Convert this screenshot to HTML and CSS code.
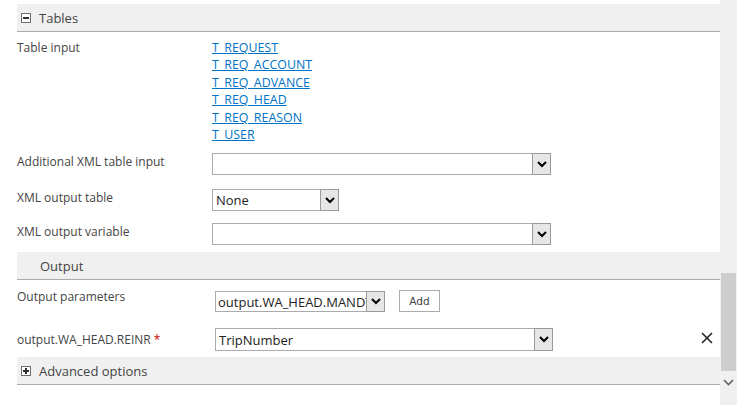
FILE: index.html
```html
<!DOCTYPE html>
<html>
<head>
<meta charset="utf-8">
<link rel="stylesheet" href="styles.css">
</head>
<body>
<div class="page">
  <div class="content">
    <div class="section-head">
      <span class="toggle"><span class="bar-h"></span></span>
      <span class="head-text">Tables</span>
    </div>

    <div class="row row-tables">
      <div class="label">Table input</div>
      <div class="field links">
        <a href="#">T_REQUEST</a>
        <a href="#">T_REQ_ACCOUNT</a>
        <a href="#">T_REQ_ADVANCE</a>
        <a href="#">T_REQ_HEAD</a>
        <a href="#">T_REQ_REASON</a>
        <a href="#">T_USER</a>
      </div>
    </div>

    <div class="row row-addxml">
      <div class="label">Additional XML table input</div>
      <div class="field">
        <div class="select wide">
          <span class="select-text"></span>
          <span class="select-btn"><svg width="10" height="7" viewBox="0 0 10 7"><polyline points="1,1 5,5 9,1" fill="none" stroke="#000" stroke-width="2"/></svg></span>
        </div>
      </div>
    </div>

    <div class="row row-xmltable">
      <div class="label">XML output table</div>
      <div class="field">
        <div class="select short">
          <span class="select-text">None</span>
          <span class="select-btn"><svg width="10" height="7" viewBox="0 0 10 7"><polyline points="1,1 5,5 9,1" fill="none" stroke="#000" stroke-width="2"/></svg></span>
        </div>
      </div>
    </div>

    <div class="row row-xmlvar">
      <div class="label">XML output variable</div>
      <div class="field">
        <div class="select wide">
          <span class="select-text"></span>
          <span class="select-btn"><svg width="10" height="7" viewBox="0 0 10 7"><polyline points="1,1 5,5 9,1" fill="none" stroke="#000" stroke-width="2"/></svg></span>
        </div>
      </div>
    </div>

    <div class="section-head sub-head">
      <span class="head-text">Output</span>
    </div>

    <div class="row row-outparams">
      <div class="label">Output parameters</div>
      <div class="field field-out">
        <div class="select param">
          <span class="select-text clip">output.WA_HEAD.MANDT</span>
          <span class="select-btn"><svg width="10" height="7" viewBox="0 0 10 7"><polyline points="1,1 5,5 9,1" fill="none" stroke="#000" stroke-width="2"/></svg></span>
        </div>
        <span class="add-btn">Add</span>
      </div>
    </div>

    <div class="row row-reinr">
      <div class="label">output.WA_HEAD.REINR <span class="req">*</span></div>
      <div class="field field-out">
        <div class="select trip">
          <span class="select-text">TripNumber</span>
          <span class="select-btn"><svg width="10" height="7" viewBox="0 0 10 7"><polyline points="1,1 5,5 9,1" fill="none" stroke="#000" stroke-width="2"/></svg></span>
        </div>
      </div>
      <span class="remove"><svg width="12" height="12" viewBox="0 0 12 12"><path d="M1 1 L11 11 M11 1 L1 11" stroke="#222" stroke-width="1.6" fill="none"/></svg></span>
    </div>

    <div class="section-head adv-head">
      <span class="toggle"><span class="bar-h"></span><span class="bar-v"></span></span>
      <span class="head-text">Advanced options</span>
    </div>
  </div>

  <div class="scrollbar">
    <div class="thumb"></div>
    <div class="scroll-down"><svg width="11" height="7" viewBox="0 0 11 7"><polyline points="1,1 5.5,5.5 10,1" fill="none" stroke="#606060" stroke-width="1.6"/></svg></div>
  </div>
</div>
</body>
</html>
```

FILE: styles.css
```css
html, body {
  margin: 0;
  padding: 0;
  background: #fff;
}

body {
  font-family: "Open Sans", "Noto Sans", "Liberation Sans", sans-serif;
  font-size: 12px;
  color: #444;
}

.page {
  display: flex;
  align-items: flex-start;
  width: 756px;
}

.content {
  width: 703px;
  margin-left: 17px;
  padding-top: 4px;
}

.section-head {
  display: flex;
  align-items: center;
  height: 27px;
  background: #f0f0f0;
  border-bottom: 1px solid #ababab;
  font-size: 13px;
  color: #444;
}

.toggle {
  position: relative;
  width: 8px;
  height: 8px;
  border: 1px solid #6d6d6d;
  background: #fff;
  margin-left: 4px;
  margin-right: 8px;
}

.bar-h {
  position: absolute;
  left: 1px;
  top: 3px;
  width: 6px;
  height: 2px;
  background: #333;
}

.bar-v {
  position: absolute;
  left: 3px;
  top: 1px;
  width: 2px;
  height: 6px;
  background: #333;
}

.sub-head .head-text {
  margin-left: 23px;
}

.row {
  display: flex;
  align-items: flex-start;
}

.label {
  width: 195px;
  flex: none;
  line-height: 18px;
  color: #444;
}

.field {
  display: flex;
  align-items: center;
}

.links {
  flex-direction: column;
  align-items: flex-start;
}

.links a {
  color: #0072c6;
  text-decoration: underline;
  font-size: 12.4px;
  line-height: 17.4px;
}

.row-tables {
  padding-top: 7px;
}

.row-tables .label {
  line-height: 17.4px;
}

.row-addxml {
  margin-top: 10px;
}

.row-xmltable {
  margin-top: 14px;
}

.row-xmlvar {
  margin-top: 12px;
}

.sub-head {
  margin-top: 7px;
}

.select {
  display: flex;
  align-items: stretch;
  height: 20px;
  border: 1px solid #ababab;
  background: #fff;
  box-sizing: content-box;
}

.select-text {
  flex: 1;
  padding-left: 3px;
  line-height: 21px;
  font-size: 13px;
  color: #222;
  overflow: hidden;
  white-space: nowrap;
}

.select-btn {
  flex: none;
  width: 17px;
  margin: -1px -1px -1px 0;
  border: 1px solid #9a9a9a;
  background: #e6e6e6;
  display: flex;
  align-items: center;
  justify-content: center;
}

.wide {
  width: 337px;
}

.short {
  width: 125px;
}

.param {
  width: 168px;
  height: 19px;
}

.param .select-text {
  line-height: 20px;
  padding-left: 2px;
}

.trip {
  width: 336px;
  height: 21px;
}

.trip .select-text {
  line-height: 22px;
}

.field-out {
  margin-left: 3px;
}

.row-outparams {
  padding-top: 7px;
}

.row-outparams .label {
  padding-top: 1px;
}

.row-outparams .field {
  margin-top: 3px;
}

.add-btn {
  margin-left: 14px;
  width: 39px;
  height: 20px;
  border: 1px solid #ababab;
  background: #fff;
  font-family: "DejaVu Sans", "Liberation Sans", sans-serif;
  font-size: 10.5px;
  line-height: 20px;
  text-align: center;
  color: #444;
}

.row-reinr {
  margin-top: 16px;
  align-items: flex-start;
}

.row-reinr .label {
  padding-top: 3px;
}

.req {
  color: #c00;
}

.remove {
  margin-left: 148px;
  margin-top: 4px;
  display: flex;
}

.adv-head {
  margin-top: 6px;
}

.scrollbar {
  width: 17px;
  height: 405px;
  background: #f0f0f0;
  display: flex;
  flex-direction: column;
  align-items: center;
}

.thumb {
  margin-top: 273px;
  width: 15px;
  height: 98px;
  background: #cdcdcd;
}

.scroll-down {
  margin-top: 8px;
  display: flex;
}
```
